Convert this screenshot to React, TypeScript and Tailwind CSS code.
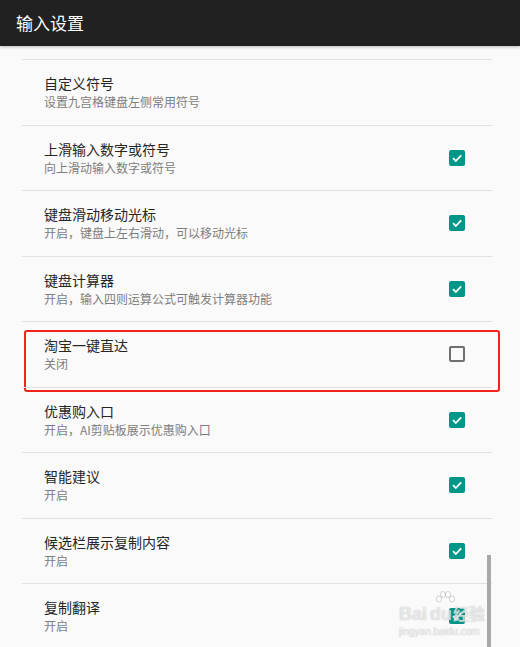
import React from "react";

type Item = { title: string; desc: string; checked?: boolean; highlight?: boolean };

const items: Item[] = [
  { title: "自定义符号", desc: "设置九宫格键盘左侧常用符号" },
  { title: "上滑输入数字或符号", desc: "向上滑动输入数字或符号", checked: true },
  { title: "键盘滑动移动光标", desc: "开启，键盘上左右滑动，可以移动光标", checked: true },
  { title: "键盘计算器", desc: "开启，输入四则运算公式可触发计算器功能", checked: true },
  { title: "淘宝一键直达", desc: "关闭", checked: false, highlight: true },
  { title: "优惠购入口", desc: "开启，AI剪贴板展示优惠购入口", checked: true },
  { title: "智能建议", desc: "开启", checked: true },
  { title: "候选栏展示复制内容", desc: "开启", checked: true },
  { title: "复制翻译", desc: "开启", checked: true },
];

function Checkbox({ checked }: { checked: boolean }) {
  if (!checked) {
    return <div className="h-4 w-4 rounded-[2px] border-2 border-[#6f6f6f]" />;
  }
  return (
    <div className="flex h-4 w-4 items-center justify-center rounded-[2px] bg-[#009688]">
      <svg width="12" height="12" viewBox="0 0 12 12" fill="none">
        <path d="M2 6.2 L4.8 9 L10.2 3.4" stroke="#fff" strokeWidth="1.8" />
      </svg>
    </div>
  );
}

function Row({ item }: { item: Item }) {
  return (
    <div className="relative flex h-[65.5px] items-center border-t border-[#e2e2e2]">
      <div className="flex-1 pl-[22px]">
        <div className="text-[14px] leading-[19px] text-[#262626]">{item.title}</div>
        <div className="text-[12px] leading-[17px] text-[#7d7d7d]">{item.desc}</div>
      </div>
      {item.checked !== undefined && (
        <div className="pr-[27px]">
          <Checkbox checked={item.checked} />
        </div>
      )}
      {item.highlight && (
        <div className="absolute left-[2px] right-[-8px] top-[8px] bottom-[-5px] rounded-[3px] border-2 border-[#f2231c]" />
      )}
    </div>
  );
}

export default function App() {
  return (
    <div
      className="relative h-[647px] w-[520px] overflow-hidden bg-[#fafafa]"
      style={{ fontFamily: '"Noto Sans CJK SC", "Noto Sans", sans-serif' }}
    >
      <header className="relative z-10 flex h-[46px] items-center bg-[#212121] pl-4 shadow-[0_1px_3px_rgba(0,0,0,0.25)]">
        <h1 className="text-[17px] text-white">输入设置</h1>
      </header>
      <div className="px-[22px] pr-[28px]">
        <div className="h-[13px]" />
        {items.map((it) => (
          <Row key={it.title} item={it} />
        ))}
      </div>
      <div className="absolute left-[487px] top-[555px] h-[92px] w-[4px] bg-[#a8a8a8]" />
      <div className="pointer-events-none absolute left-[399px] top-[591px] w-[90px] select-none leading-none">
        <svg width="20" height="14" viewBox="0 0 20 14" className="ml-[36px]" fill="rgba(255,255,255,0.7)" stroke="rgba(130,130,130,0.45)" strokeWidth="0.8">
          <ellipse cx="4" cy="8" rx="2.5" ry="3" />
          <ellipse cx="8" cy="3.5" rx="2.5" ry="3" />
          <ellipse cx="13" cy="3.5" rx="2.5" ry="3" />
          <ellipse cx="17" cy="8" rx="2.5" ry="3" />
        </svg>
        <div className="flex items-end whitespace-nowrap text-[18px] font-bold text-white/70 [text-shadow:0_0_1px_rgba(110,110,110,0.55)]" style={{ fontFamily: '"Liberation Sans", "Noto Sans CJK SC", sans-serif' }}>
          <span>Bai</span>
          <span className="ml-[3px]">du</span>
          <span className="ml-[1px] text-[16px]">经验</span>
        </div>
        <div className="mt-[4px] whitespace-nowrap text-[10px] text-white/70 [text-shadow:0_0_1px_rgba(110,110,110,0.55)]" style={{ fontFamily: '"Liberation Sans", sans-serif' }}>
          jingyan.baidu.com
        </div>
      </div>
    </div>
  );
}
